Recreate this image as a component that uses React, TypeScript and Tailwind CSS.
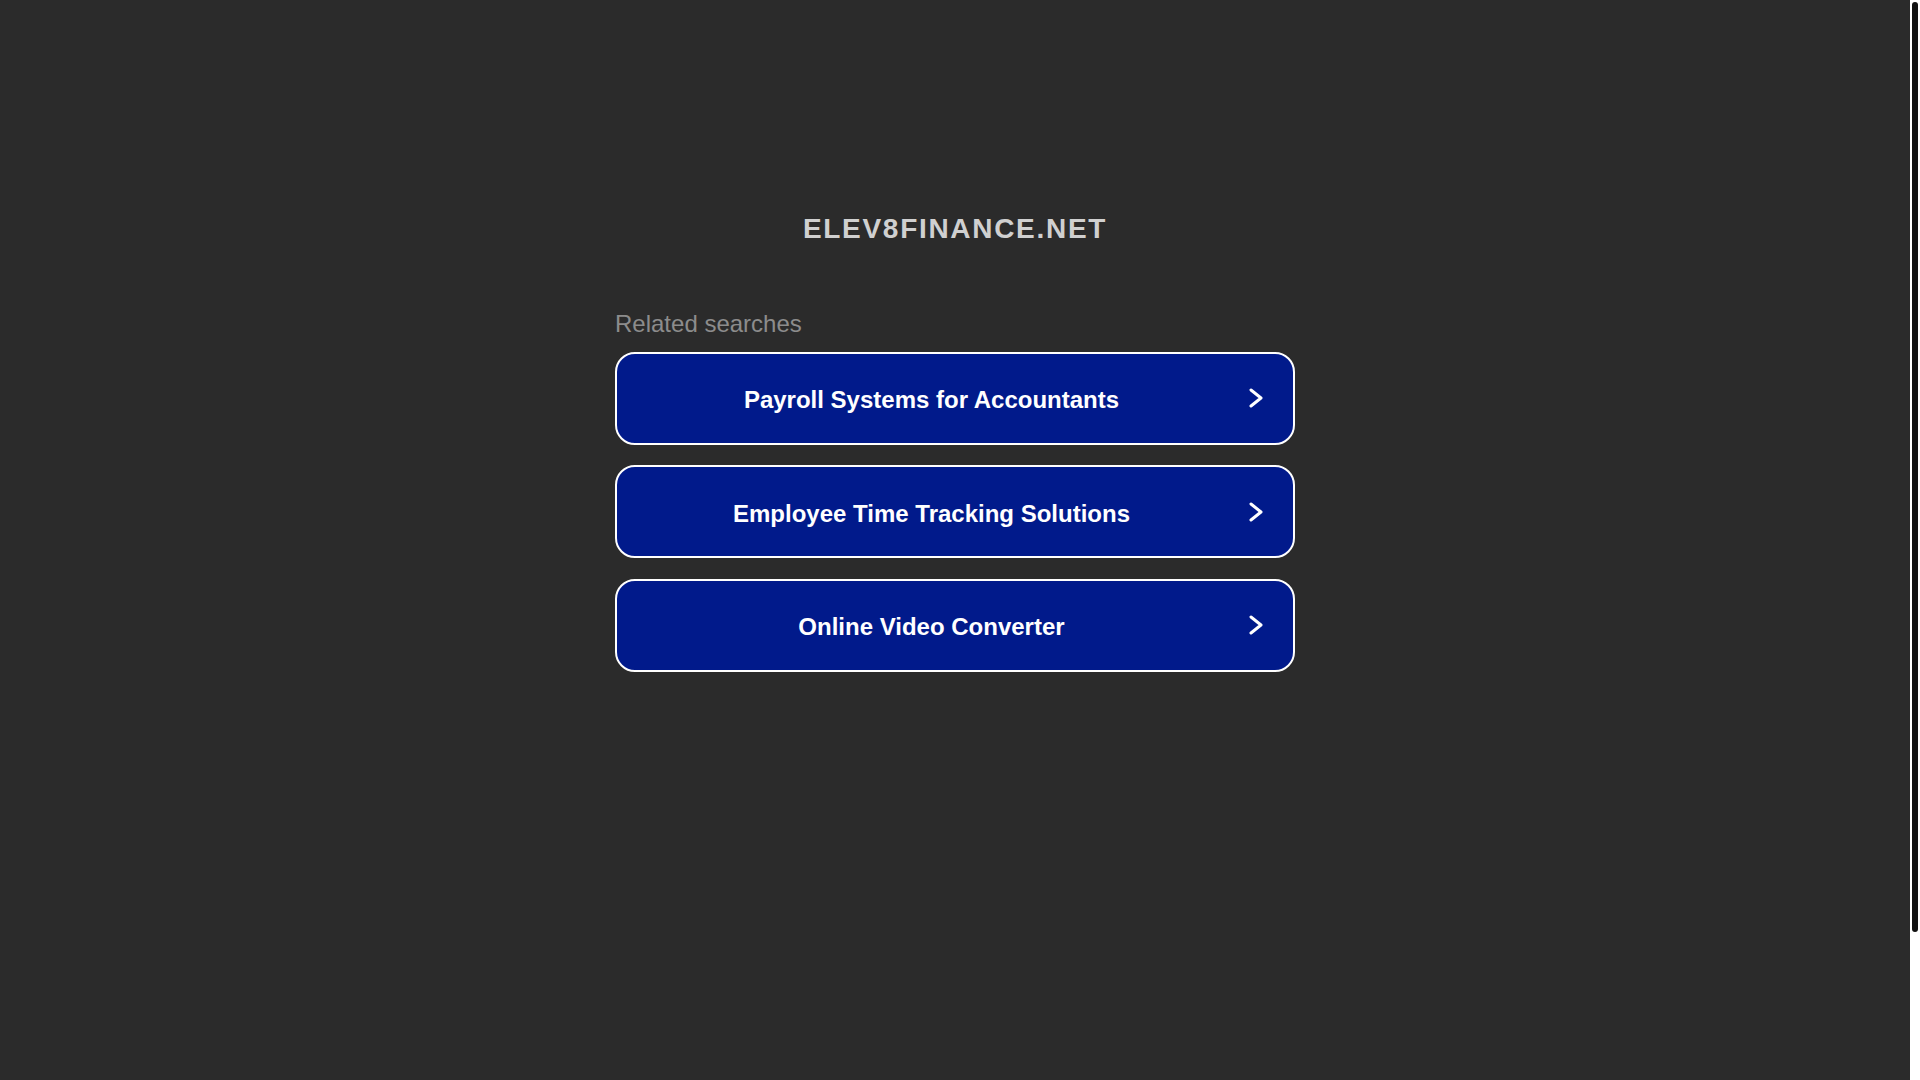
const searches = [
  "Payroll Systems for Accountants",
  "Employee Time Tracking Solutions",
  "Online Video Converter",
];

function Chevron() {
  return (
    <svg width="14" height="20" viewBox="0 0 14 20" fill="none" className="shrink-0">
      <polyline
        points="2,2 12,10 2,18"
        stroke="#ffffff"
        strokeWidth="3"
        strokeLinecap="round"
        strokeLinejoin="round"
      />
    </svg>
  );
}

function SearchLink({ label }: { label: string }) {
  return (
    <a
      href="#"
      className="flex h-[93px] items-center rounded-[20px] border-2 border-white bg-[#011a8b] pr-[30px] text-white no-underline"
    >
      <span className="flex-1 pt-[4px] text-center text-[24px] font-bold leading-[1.15]">{label}</span>
      <span className="ml-[3px] flex">
        <Chevron />
      </span>
    </a>
  );
}

// page scrollbar strip on the right edge
function ScrollTrack() {
  return (
    <div className="w-[10px] shrink-0 bg-white pt-[2px]">
      <div className="mx-[2px] h-[930px] rounded-[3px] bg-[#111111]" />
    </div>
  );
}

export default function App() {
  return (
    <div
      className="flex h-screen overflow-hidden bg-[#2b2b2b]"
      style={{ fontFamily: '"Liberation Sans", Arial, sans-serif' }}
    >
      <main className="flex flex-1 flex-col items-center pt-[213px]">
        <h1 className="text-[28px] font-bold leading-[1.15] tracking-[1.7px] text-[#d0d0d0]">
          ELEV8FINANCE.NET
        </h1>

        <div className="mt-[65px] w-[680px]">
          <p className="text-[24px] leading-[1.15] text-[#8c8c8c]">Related searches</p>
          <div className="mt-[14px] flex flex-col gap-[20.5px]">
            {searches.map((item) => (
              <SearchLink key={item} label={item} />
            ))}
          </div>
        </div>
      </main>
      <ScrollTrack />
    </div>
  );
}
